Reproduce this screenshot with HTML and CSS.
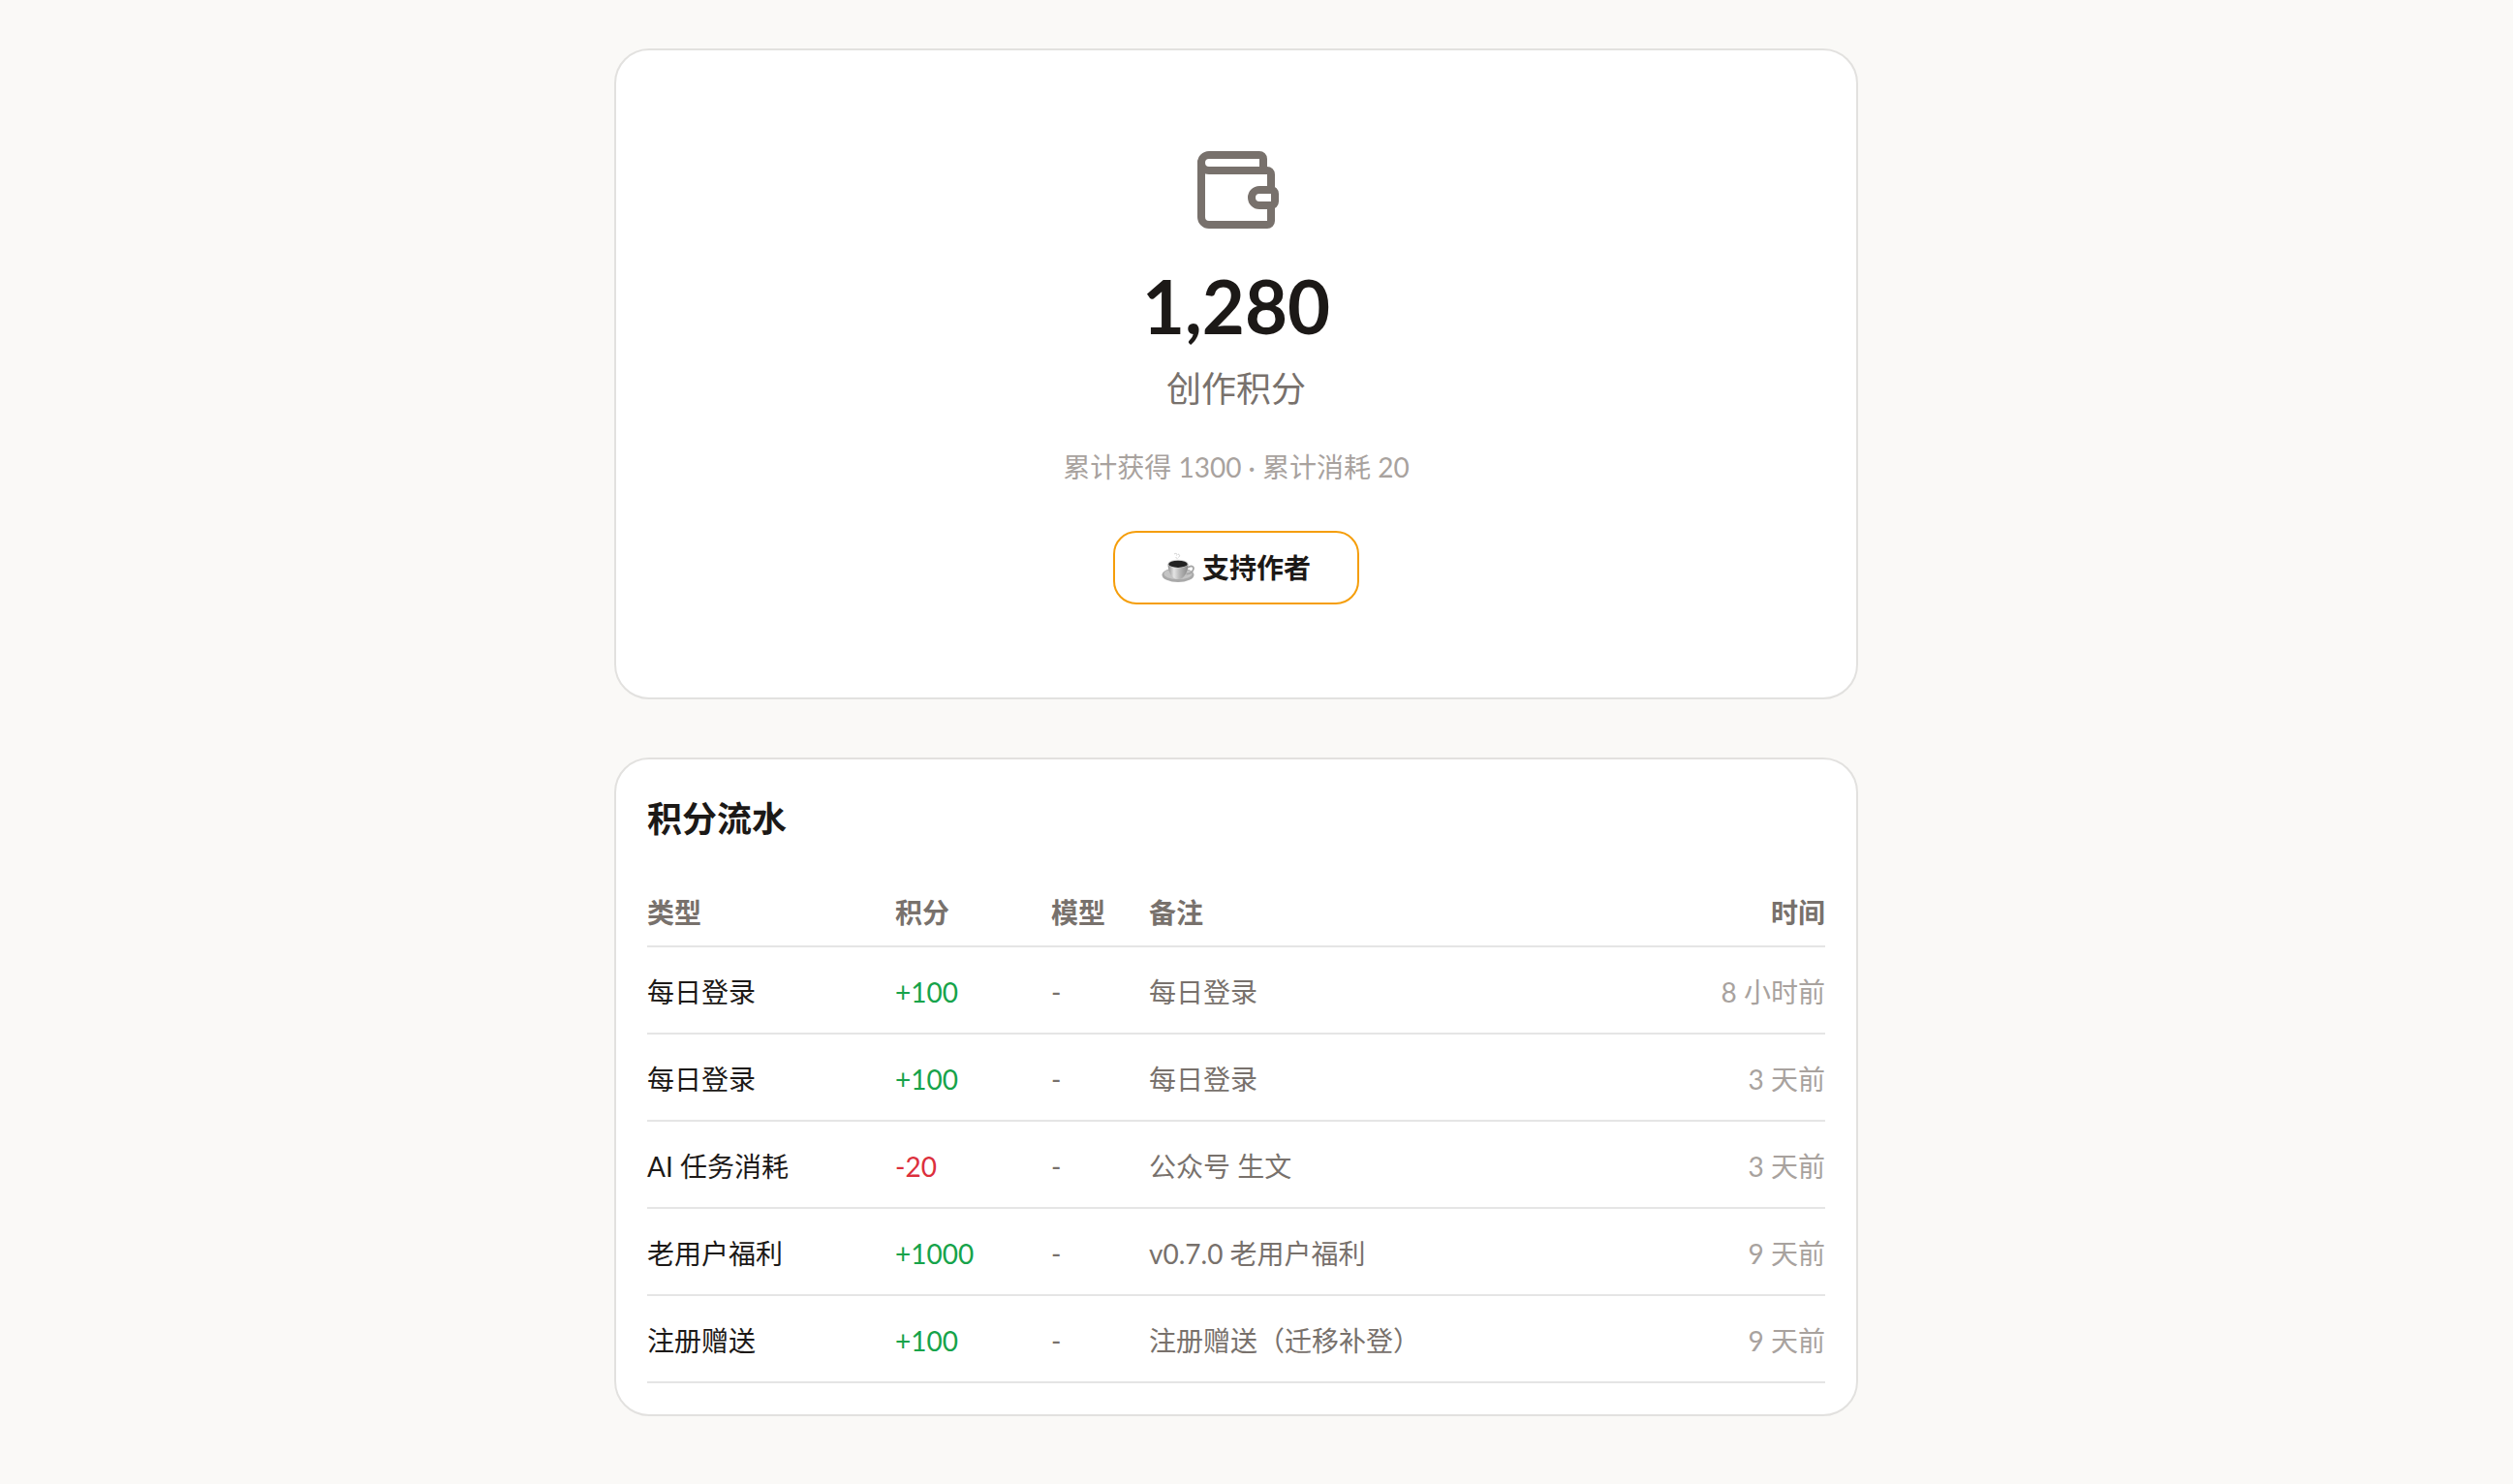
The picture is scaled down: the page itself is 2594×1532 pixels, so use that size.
FILE: index.html
```
<!DOCTYPE html>
<html lang="zh-CN">

<head>
    <meta charset="UTF-8">
    <meta name="viewport" content="width=device-width, initial-scale=1.0">
    <title>创作积分</title>
    <link rel="stylesheet" href="styles.css">
</head>

<body>

    <main class="page">

        <!-- 积分余额 -->
        <section class="card balance">
            <svg class="balance-icon" viewBox="0 0 24 24" fill="none" stroke="currentColor" stroke-width="2" stroke-linecap="round" stroke-linejoin="round" aria-hidden="true">
                <path d="M19 7V4a1 1 0 0 0-1-1H5a2 2 0 0 0 0 4h15a1 1 0 0 1 1 1v4h-3a2 2 0 0 0 0 4h3a1 1 0 0 0 1-1v-2a1 1 0 0 0-1-1" />
                <path d="M3 5v14a2 2 0 0 0 2 2h15a1 1 0 0 0 1-1v-4" />
            </svg>
            <div class="balance-value">1,280</div>
            <div class="balance-label">创作积分</div>
            <div class="balance-total">累计获得 1300 · 累计消耗 20</div>
            <button type="button" class="btn-support">
                <svg class="cup" viewBox="0 0 34 32" aria-hidden="true">
                    <defs>
                        <linearGradient id="cupFill" x1="0" x2="1" y1="0" y2="0">
                            <stop offset="0" stop-color="#8f8f8f" />
                            <stop offset="0.3" stop-color="#e4e4e4" />
                            <stop offset="0.6" stop-color="#b5b5b5" />
                            <stop offset="1" stop-color="#8a8a8a" />
                        </linearGradient>
                    </defs>
                    <path d="M13 2c2-1.500 4 0 2.500 1.500M17 2c2 .5 2 2 .5 3.500M14.500 5.500l2 1" fill="none" stroke="#d2d2d2" stroke-width="1" />
                    <ellipse cx="17" cy="23.500" rx="16.500" ry="7.500" fill="#a9a9a9" />
                    <ellipse cx="17" cy="22.500" rx="14.500" ry="5.500" fill="#c4c4c4" />
                    <path d="M27 16c4-3 7-1 5.500 2.500c-1 2.500-4 4-7 4" fill="none" stroke="#a5a5a5" stroke-width="1.800" />
                    <path d="M6.500 12c0 8 4 16 10.500 16s10.500-8 10.500-16z" fill="url(#cupFill)" />
                    <ellipse cx="17" cy="12" rx="10.500" ry="4.200" fill="#d9d9d9" />
                    <ellipse cx="17" cy="12.300" rx="9.800" ry="3.600" fill="#232323" />
                </svg>
                <span>支持作者</span>
            </button>
        </section>

        <!-- 积分流水 -->
        <section class="card history">
            <h2>积分流水</h2>
            <table>
                <thead>
                    <tr>
                        <th class="col-type">类型</th>
                        <th class="col-points">积分</th>
                        <th class="col-model">模型</th>
                        <th>备注</th>
                        <th class="time">时间</th>
                    </tr>
                </thead>
                <tbody>
                    <tr>
                        <td>每日登录</td>
                        <td class="plus">+100</td>
                        <td class="muted">-</td>
                        <td class="muted">每日登录</td>
                        <td class="time">8 小时前</td>
                    </tr>
                    <tr>
                        <td>每日登录</td>
                        <td class="plus">+100</td>
                        <td class="muted">-</td>
                        <td class="muted">每日登录</td>
                        <td class="time">3 天前</td>
                    </tr>
                    <tr>
                        <td>AI 任务消耗</td>
                        <td class="minus">-20</td>
                        <td class="muted">-</td>
                        <td class="muted">公众号 生文</td>
                        <td class="time">3 天前</td>
                    </tr>
                    <tr>
                        <td>老用户福利</td>
                        <td class="plus">+1000</td>
                        <td class="muted">-</td>
                        <td class="muted">v0.7.0 老用户福利</td>
                        <td class="time">9 天前</td>
                    </tr>
                    <tr>
                        <td>注册赠送</td>
                        <td class="plus">+100</td>
                        <td class="muted">-</td>
                        <td class="muted">注册赠送（迁移补登）</td>
                        <td class="time">9 天前</td>
                    </tr>
                </tbody>
            </table>
        </section>

    </main>

</body>

</html>
```
FILE: styles.css
```
* {
    box-sizing: border-box;
}

body {
    margin: 0;
    background: #faf9f7;
    color: #1c1917;
    font-family: Lato, "Noto Sans CJK SC", sans-serif;
    font-size: 28px;
    line-height: 40px;
}

.page {
    max-width: 1284px;
    margin: 0 auto;
    padding: 50px 0;
    display: flex;
    flex-direction: column;
    gap: 60px;
}

/* 右侧为滚动区域预留 */
@media (min-width: 1400px) {
    body {
        padding-right: 42px;
    }
}

.card {
    background: #fff;
    border: 2px solid #e2e1df;
    border-radius: 36px;
}

/* 积分余额 */
.balance {
    display: flex;
    flex-direction: column;
    align-items: center;
    padding: 96px 32px;
}

.balance-icon {
    width: 96px;
    height: 96px;
    color: #78716c;
}

.balance-value {
    margin-top: 32px;
    font-size: 76px;
    font-weight: bold;
    line-height: 80px;
}

.balance-label {
    margin-top: 16px;
    color: #78716c;
    font-size: 36px;
    line-height: 58px;
}

.balance-total {
    margin-top: 32px;
    color: #a8a29e;
}

.btn-support {
    display: flex;
    align-items: center;
    gap: 8px;
    margin-top: 46px;
    padding: 16px 48px;
    background: #fff;
    color: #1c1917;
    border: 2px solid #f59e0b;
    border-radius: 24px;
    font-family: inherit;
    font-size: 28px;
    font-weight: bold;
    line-height: 40px;
    cursor: pointer;
}

.btn-support:hover {
    background: #fffbeb;
}

.cup {
    width: 34px;
    height: 32px;
}

/* 积分流水 */
.history {
    padding: 32px;
}

.history h2 {
    margin: 0 0 32px;
    font-size: 36px;
    font-weight: bold;
    line-height: 58px;
}

table {
    width: 100%;
    border-collapse: separate;
    border-spacing: 0;
}

th, td {
    padding: 26px 0 22px;
    border-bottom: 2px solid #e5e5e5;
    text-align: left;
    white-space: nowrap;
}

th {
    padding: 16px 0 14px;
    color: #78716c;
    font-weight: bold;
}

.col-type {
    width: 256px;
}

.col-points {
    width: 161px;
}

.col-model {
    width: 101px;
}

.muted {
    color: #78716c;
}

.plus {
    color: #16a34a;
}

.minus {
    color: #dc2f3c;
}

.time {
    text-align: right;
}

td.time {
    color: #a8a29e;
}
```
